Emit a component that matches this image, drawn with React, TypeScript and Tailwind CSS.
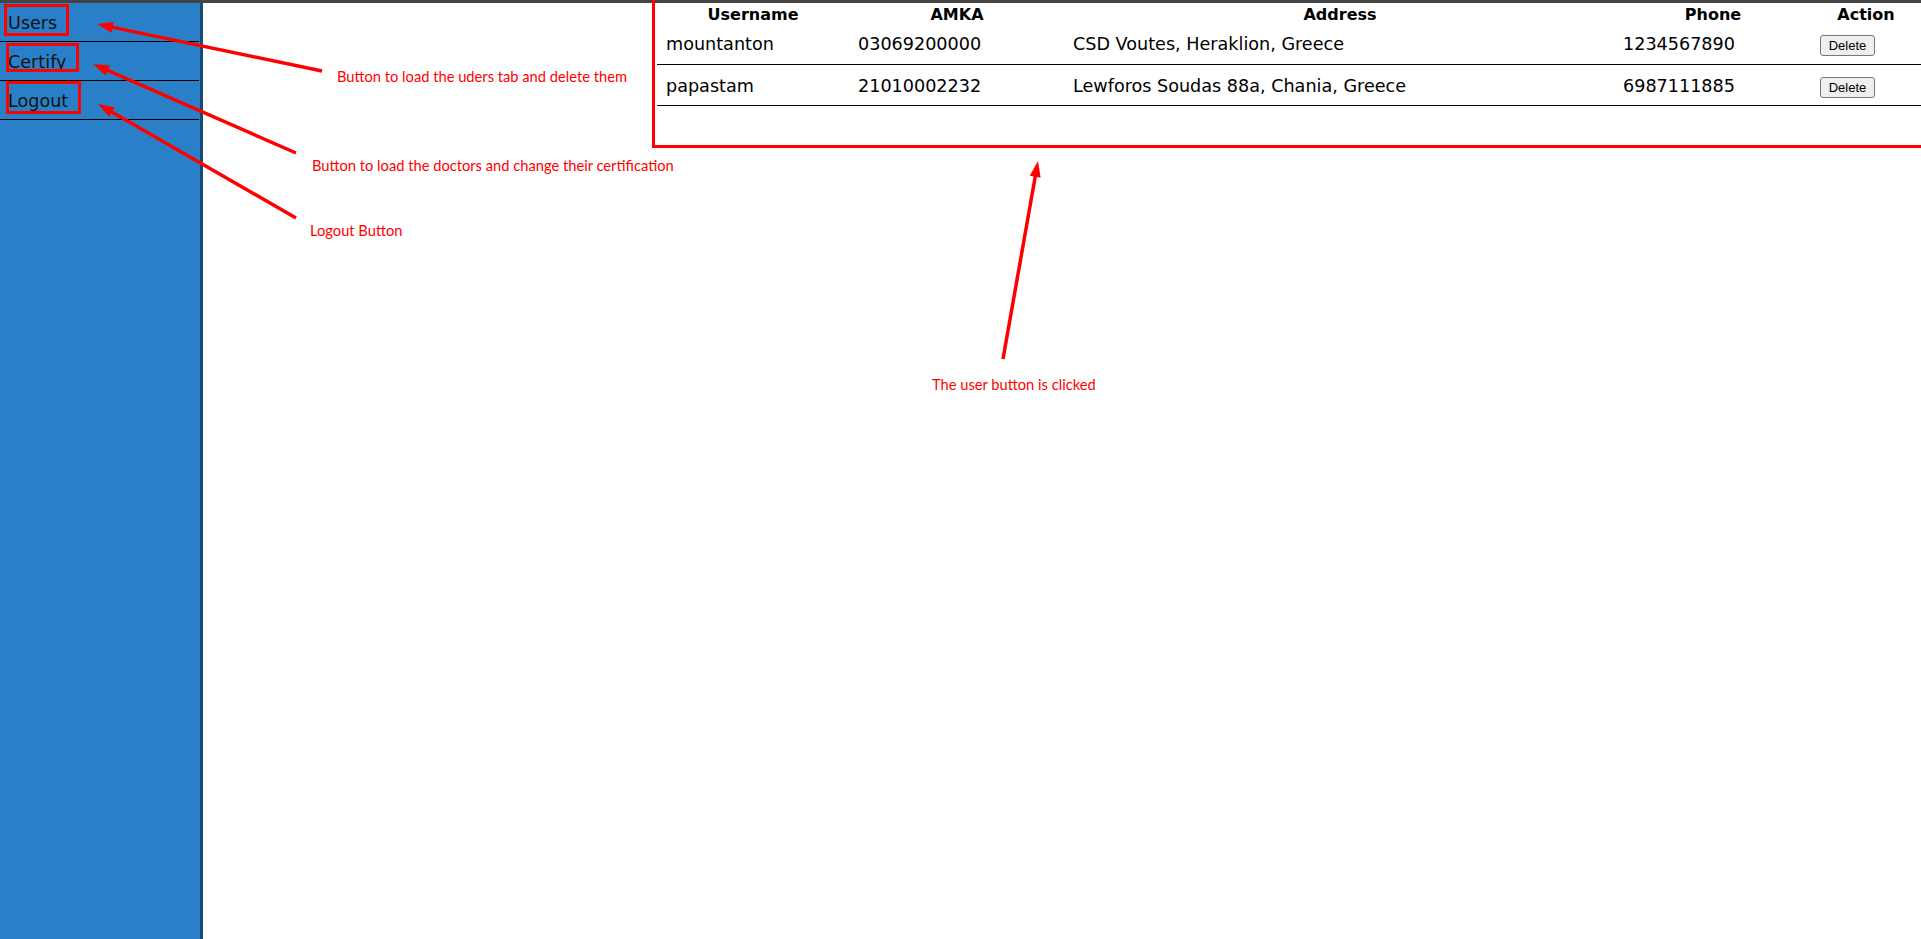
import React from "react";

interface User {
  username: string;
  amka: string;
  address: string;
  phone: string;
}

const users: User[] = [
  { username: "mountanton", amka: "03069200000", address: "CSD Voutes, Heraklion, Greece", phone: "1234567890" },
  { username: "papastam", amka: "21010002232", address: "Lewforos Soudas 88a, Chania, Greece", phone: "6987111885" },
];

const cols = "grid grid-cols-[192px_216px_550px_196px_110px]";

// red arrow for the annotations, head points at (hx, hy)
const Arrow = ({ tx, ty, hx, hy }: { tx: number; ty: number; hx: number; hy: number }) => {
  const dx = hx - tx;
  const dy = hy - ty;
  const len = Math.sqrt(dx * dx + dy * dy);
  const ux = dx / len;
  const uy = dy / len;
  const bx = hx - ux * 16;
  const by = hy - uy * 16;
  const nx = -uy * 5.5;
  const ny = ux * 5.5;
  return (
    <g>
      <line x1={tx} y1={ty} x2={bx + ux * 2} y2={by + uy * 2} stroke="#ff0000" strokeWidth={3.5} />
      <polygon points={`${hx},${hy} ${bx + nx},${by + ny} ${bx - nx},${by - ny}`} fill="#ff0000" />
    </g>
  );
};

const Note = ({ x, y, children }: { x: number; y: number; children: React.ReactNode }) => (
  <span
    className="absolute whitespace-nowrap text-[14.7px] leading-4 text-[#ff0000] font-['Lato',sans-serif]"
    style={{ left: x, top: y - 8 }}
  >
    {children}
  </span>
);

const App = () => {
  return (
    <div className="relative h-[939px] w-full overflow-hidden bg-white flex flex-col font-['DejaVu_Sans',sans-serif]">
      <div className="h-[3px] w-full bg-[#444444]" />
      <div className="flex flex-1">
        <aside className="w-[203px] shrink-0 bg-[#2a80c8] border-r-[3px] border-[#1b4b73]">
          {["Users", "Certify", "Logout"].map((item) => (
            <div
              key={item}
              className="h-[39px] w-[199px] border-b border-black pl-2 pt-[2px] flex items-center text-[17.6px] text-[#111]"
            >
              {item}
            </div>
          ))}
        </aside>
        <main className="flex-1 flex justify-end">
          <div className="w-[1264px]">
            <div className={`${cols} h-[22px] items-center text-[16px] font-bold text-black`}>
              <div className="text-center">Username</div>
              <div className="text-center">AMKA</div>
              <div className="text-center">Address</div>
              <div className="text-center">Phone</div>
              <div className="text-center">Action</div>
            </div>
            {users.map((u, i) => (
              <div
                key={u.username}
                className={`${cols} ${i === 0 ? "h-[40px]" : "h-[41px] pt-[2px]"} items-center border-b border-black text-[17.6px] text-black`}
              >
                <div className="pl-[9px]">{u.username}</div>
                <div className="pl-[9px]">{u.amka}</div>
                <div className="pl-[8px]">{u.address}</div>
                <div className="pl-[8px]">{u.phone}</div>
                <div className="pl-[9px]">
                  <button className="h-[21px] w-[55px] rounded-[3px] border border-[#767676] bg-[#efefef] text-[13px] text-black font-['Liberation_Sans',sans-serif]">
                    Delete
                  </button>
                </div>
              </div>
            ))}
          </div>
        </main>
      </div>

      {/* annotation layer */}
      <div className="pointer-events-none absolute inset-0">
        <svg width={1921} height={939} className="absolute left-0 top-0">
          <rect x={5.5} y={5.5} width={62} height={29} fill="none" stroke="#ff0000" strokeWidth={3} />
          <rect x={7.5} y={44.5} width={70} height={26} fill="none" stroke="#ff0000" strokeWidth={3} />
          <rect x={7.5} y={82.5} width={72} height={30} fill="none" stroke="#ff0000" strokeWidth={3} />
          <rect x={653.5} y={-5} width={1300} height={151.5} fill="none" stroke="#ff0000" strokeWidth={3} />
          <Arrow tx={322} ty={71} hx={97} hy={24} />
          <Arrow tx={296} ty={153} hx={93} hy={64} />
          <Arrow tx={296} ty={218} hx={98} hy={104} />
          <Arrow tx={1003} ty={359} hx={1038} hy={161} />
        </svg>
        <Note x={337} y={76}>Button to load the uders tab and delete them</Note>
        <Note x={312} y={165}>Button to load the doctors and change their certification</Note>
        <Note x={310} y={230}>Logout Button</Note>
        <Note x={932} y={384}>The user button is clicked</Note>
      </div>
    </div>
  );
};

export default App;
